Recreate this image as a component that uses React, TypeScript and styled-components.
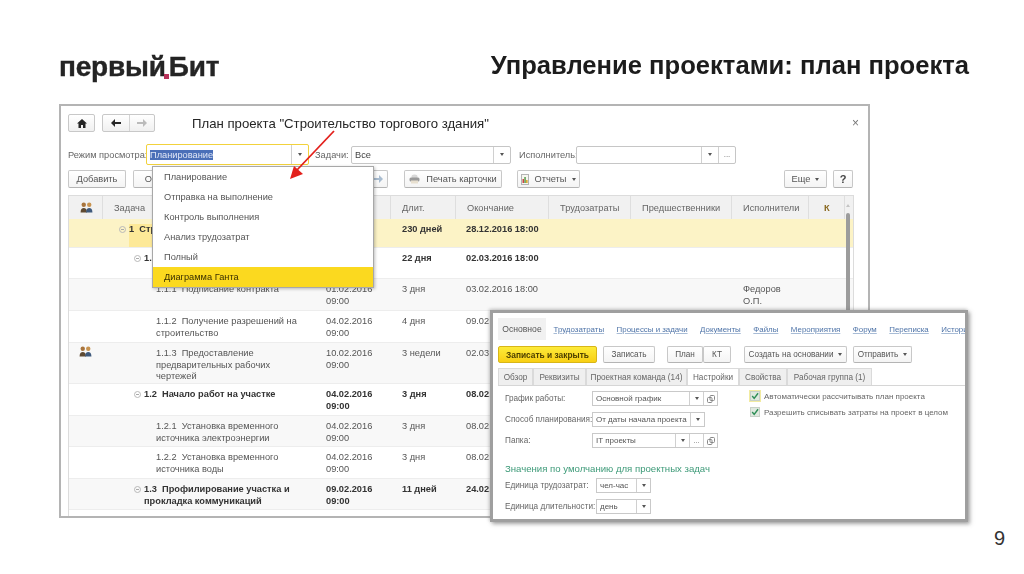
import React from "react";
import styled, { createGlobalStyle } from "styled-components";

const Global = createGlobalStyle`
  html, body { margin: 0; padding: 0; background: #fff; }
  body { font-family: "Liberation Sans", Arial, sans-serif; overflow: hidden; }
`;

const Slide = styled.div`
  position: relative;
  width: 1024px;
  height: 574px;
  overflow: hidden;
  background: #fff;
`;
const Header = styled.header`
  height: 104px;
  padding: 47px 55px 0 59px;
  box-sizing: border-box;
  display: flex;
  justify-content: space-between;
  align-items: flex-start;
`;
const Logo = styled.div`
  position: relative;
  margin-top: 2px;
  font-weight: 700;
  font-size: 28px;
  line-height: 36px;
  letter-spacing: -0.2px;
  color: #242424;
  -webkit-text-stroke: 0.4px #242424;
  filter: blur(0.4px);
`;
const LogoWord = styled.span`
  margin-right: 3px;
`;
const LogoDot = styled.span`
  position: absolute;
  left: 105px;
  top: 25px;
  width: 5px;
  height: 5px;
  background: #b8325a;
`;
const Title = styled.h1`
  margin: 3px 0 0;
  font-size: 25.6px;
  line-height: 30px;
  font-weight: 700;
  color: #1c1c1c;
  filter: blur(0.25px);
`;
const Win = styled.section`
  margin-left: 59px;
  width: 811px;
  height: 414px;
  box-sizing: border-box;
  border: 2px solid #b4b4b4;
  background: #fff;
  padding: 8px 15px 0 7px;
  overflow: hidden;
  color: #555;
  font-size: 9.25px;
  filter: blur(0.3px);
`;
const Row = styled.div<{ $mt?: number }>`
  display: flex;
  align-items: center;
  margin-top: ${(p) => p.$mt ?? 0}px;
`;
const NavGroup = styled.div`
  display: flex;
  height: 18px;
  box-sizing: border-box;
  border: 1px solid #c8c8c8;
  border-radius: 2px;
  background: linear-gradient(#fff, #f0f0f0);
  margin-right: 7px;
`;
const NavBtn = styled.div<{ $w: number; $sep?: boolean }>`
  width: ${(p) => p.$w}px;
  display: flex;
  align-items: center;
  justify-content: center;
  border-left: ${(p) => (p.$sep ? "1px solid #d4d4d4" : "none")};
`;
const WinTitle = styled.div`
  margin-left: 30px;
  font-size: 13.2px;
  color: #262626;
`;
const Close = styled.div`
  margin-left: auto;
  margin-right: -6px;
  color: #777;
  font-size: 12px;
`;
const Label = styled.span<{ $w: number; $pl?: number }>`
  width: ${(p) => p.$w}px;
  padding-left: ${(p) => p.$pl ?? 0}px;
  box-sizing: border-box;
  flex: none;
  white-space: nowrap;
  color: #666;
`;
const Field = styled.div<{ $w: number; $focus?: boolean }>`
  width: ${(p) => p.$w}px;
  height: ${(p) => (p.$focus ? 21 : 18)}px;
  flex: none;
  box-sizing: border-box;
  display: flex;
  border: 1px solid ${(p) => (p.$focus ? "#f2d23c" : "#c6c6c6")};
  background: #fff;
  border-radius: 2px;
  color: #444;
`;
const FieldText = styled.div`
  flex: 1;
  min-width: 0;
  padding-left: 3px;
  display: flex;
  align-items: center;
  white-space: nowrap;
`;
const Selected = styled.span`
  background: #4a6fb8;
  color: #dfe6f5;
`;
const FieldBtn = styled.div<{ $w?: number }>`
  width: ${(p) => p.$w ?? 16}px;
  flex: none;
  border-left: 1px solid #d0d0d0;
  display: flex;
  align-items: center;
  justify-content: center;
  color: #666;
  font-size: 8px;
`;
const Caret = styled.span`
  width: 0;
  height: 0;
  border-left: 2px solid transparent;
  border-right: 2px solid transparent;
  border-top: 3px solid #555;
`;
const Btn = styled.div<{ $w: number; $ml?: number; $h?: number; $gap?: number }>`
  width: ${(p) => p.$w}px;
  height: ${(p) => p.$h ?? 18}px;
  margin-left: ${(p) => p.$ml ?? 0}px;
  flex: none;
  box-sizing: border-box;
  border: 1px solid #c8c8c8;
  border-bottom-color: #b4b4b4;
  border-radius: 2px;
  background: linear-gradient(#fff, #f4f4f4);
  display: flex;
  align-items: center;
  justify-content: center;
  gap: ${(p) => p.$gap ?? 5}px;
  color: #555;
  white-space: nowrap;
`;
const HelpMark = styled.span`
  font-size: 11px;
  font-weight: 700;
  color: #444;
`;
const Spacer = styled.div`
  flex: 1;
`;
const Table = styled.div`
  margin-top: 7px;
  margin-right: -1px;
  border: 1px solid #dcdcdc;
  position: relative;
  height: 330px;
  overflow: hidden;
`;
const cols = "34px 217px 71px 65px 93px 82px 101px 77px 36px 1fr";
const HeadRow = styled.div`
  display: grid;
  grid-template-columns: ${cols};
  height: 23px;
  background: #f1f1f1;
`;
const HeadCell = styled.div<{ $accent?: boolean }>`
  display: flex;
  align-items: center;
  padding-left: ${(p) => (p.$accent ? 15 : 11)}px;
  border-right: 1px solid #dedede;
  color: ${(p) => (p.$accent ? "#8a6a22" : "#666")};
  font-weight: ${(p) => (p.$accent ? 700 : 400)};
`;
const BodyRow = styled.div<{ $h: number; $bg: string; $bold?: boolean }>`
  display: grid;
  grid-template-columns: ${cols};
  height: ${(p) => p.$h}px;
  background: ${(p) => p.$bg};
  border-bottom: 1px solid #ededed;
  box-sizing: border-box;
  line-height: 11.5px;
  font-weight: ${(p) => (p.$bold ? 700 : 400)};
  color: ${(p) => (p.$bold ? "#333" : "#555")};
`;
const Cell = styled.div<{ $pl?: number }>`
  padding: 5px 0 0 ${(p) => p.$pl ?? 11}px;
  min-width: 0;
  white-space: nowrap;
`;
const IconCell = styled.div`
  padding: 3px 0 0 10px;
`;
const TaskCell = styled.div<{ $indent: number }>`
  padding: 5px 14px 0 ${(p) => p.$indent}px;
  display: flex;
  gap: 3px;
  min-width: 0;
`;
const TaskText = styled.span<{ $mark?: boolean }>`
  white-space: pre-wrap;
  background: ${(p) => (p.$mark ? "#fde998" : "transparent")};
`;
const Toggle = styled.span`
  flex: none;
  width: 7px;
  height: 7px;
  margin-top: 2px;
  border: 1px solid #b9b9b9;
  border-radius: 50%;
  box-sizing: border-box;
  position: relative;
  &::after {
    content: "";
    position: absolute;
    left: 1px;
    right: 1px;
    top: 2px;
    height: 1px;
    background: #aaa;
  }
`;
const ScrollThumb = styled.div`
  position: absolute;
  right: 3px;
  top: 17px;
  bottom: 0;
  width: 4px;
  border-radius: 2px;
  background: #9c9c9c;
`;
const ScrollUp = styled.div`
  position: absolute;
  right: 3px;
  top: 8px;
  width: 0;
  border-left: 2px solid transparent;
  border-right: 2px solid transparent;
  border-bottom: 3px solid #c4c4c4;
`;
const Dropdown = styled.div`
  position: absolute;
  left: 152px;
  top: 166px;
  width: 222px;
  height: 122px;
  box-sizing: border-box;
  background: #fff;
  border: 1px solid #a8a8a8;
  box-shadow: 1px 1px 3px rgba(0, 0, 0, 0.25);
  font-size: 9.25px;
  color: #555;
  filter: blur(0.25px);
`;
const DropItem = styled.div<{ $active?: boolean }>`
  height: 20px;
  padding-left: 11px;
  display: flex;
  align-items: center;
  background: ${(p) => (p.$active ? "#fbd91f" : "transparent")};
  color: ${(p) => (p.$active ? "#3a3000" : "#555")};
`;
const ArrowSvg = styled.svg`
  position: absolute;
  left: 284px;
  top: 128px;
`;
const Overlay = styled.section`
  position: absolute;
  left: 490px;
  top: 310px;
  width: 478px;
  height: 212px;
  box-sizing: border-box;
  border: 3px solid #9f9f9f;
  box-shadow: 2px 2px 4px rgba(90, 90, 90, 0.55), -1px -1px 3px rgba(130, 130, 130, 0.4);
  background: #fff;
  padding: 5px 0 0 5px;
  overflow: hidden;
  font-size: 8.2px;
  color: #666;
  filter: blur(0.55px);
`;
const Nav = styled.div`
  display: flex;
  align-items: center;
  height: 22px;
  gap: 12.5px;
  white-space: nowrap;
`;
const NavCurrent = styled.div`
  background: #f1f1f1;
  height: 22px;
  width: 48px;
  margin-right: -5px;
  flex: none;
  display: flex;
  align-items: center;
  justify-content: center;
  color: #555;
  font-size: 8.6px;
`;
const NavLink = styled.span`
  color: #4f74a8;
  font-size: 7.9px;
  text-decoration: underline;
  text-decoration-color: #a8bcd6;
`;
const YellowBtn = styled.div`
  width: 99px;
  height: 17px;
  flex: none;
  box-sizing: border-box;
  border: 1px solid #d8b618;
  border-radius: 2px;
  background: linear-gradient(#fdeb3a, #f8cf14);
  display: flex;
  align-items: center;
  justify-content: center;
  color: #4d4100;
  font-size: 8.4px;
  font-weight: 700;
`;
const Tabs = styled.div`
  display: flex;
  height: 17px;
  margin: 5px -5px 0 0;
  border-bottom: 1px solid #d6d6d6;
  align-items: stretch;
`;
const Tab = styled.div<{ $w: number; $active?: boolean }>`
  width: ${(p) => p.$w}px;
  flex: none;
  box-sizing: border-box;
  display: flex;
  align-items: center;
  justify-content: center;
  white-space: nowrap;
  background: ${(p) => (p.$active ? "#fff" : "#efefef")};
  border: 1px solid #dadada;
  border-bottom: none;
`;
const SettingsBody = styled.div`
  display: flex;
`;
const FormCol = styled.div`
  width: 245px;
  flex: none;
  padding: 5px 0 0 7px;
  box-sizing: border-box;
`;
const FormRow = styled.div<{ $mt?: number; $label?: number }>`
  display: grid;
  grid-template-columns: ${(p) => p.$label ?? 87}px auto;
  justify-content: start;
  align-items: center;
  height: 15px;
  margin-top: ${(p) => p.$mt ?? 0}px;
  white-space: nowrap;
`;
const SmallField = styled.div<{ $w: number }>`
  width: ${(p) => p.$w}px;
  height: 15px;
  box-sizing: border-box;
  border: 1px solid #c9c9c9;
  display: flex;
  color: #555;
  font-size: 8px;
`;
const SmallBtn = styled.div`
  width: 13px;
  flex: none;
  border-left: 1px solid #d0d0d0;
  display: flex;
  align-items: center;
  justify-content: center;
  font-size: 7px;
  color: #666;
`;
const SectionHead = styled.div`
  margin-top: 14px;
  font-size: 9.6px;
  line-height: 14px;
  color: #3d9a78;
  white-space: nowrap;
`;
const Checks = styled.div`
  padding: 5px 0 0 7px;
  display: flex;
  flex-direction: column;
  gap: 6px;
`;
const CheckRow = styled.div`
  display: flex;
  align-items: center;
  gap: 4px;
  height: 10px;
  white-space: nowrap;
  font-size: 8px;
`;
const CheckBox = styled.span<{ $ring?: boolean }>`
  width: 10px;
  height: 10px;
  flex: none;
  background: #dfe9df;
  border: 1px solid #c8d0c8;
  box-sizing: border-box;
  display: flex;
  align-items: center;
  justify-content: center;
  box-shadow: ${(p) => (p.$ring ? "0 0 0 1px #f2eba0" : "none")};
`;
const Footer = styled.footer`
  display: flex;
  justify-content: flex-end;
  padding: 7px 19px 0 0;
  font-size: 20px;
  line-height: 26px;
  color: #333;
`;

const People = () => (
  <svg width="13" height="11" viewBox="0 0 14 12">
    <circle cx="4" cy="3" r="2.4" fill="#a8743c" />
    <path d="M0.5 11.500c0-3.500 1.500-5 3.500-5s3.500 1.500 3.500 5z" fill="#5f4a32" />
    <circle cx="10" cy="3" r="2.4" fill="#c8934f" />
    <path d="M6.500 11.500c0-3.500 1.500-5 3.500-5s3.500 1.500 3.500 5z" fill="#3f5a7c" />
  </svg>
);
const Home = () => (
  <svg width="10" height="9" viewBox="0 0 10 9">
    <path d="M5 0 0 4.500h1.500V9h2.500V6h2v3h2.500V4.500H10z" fill="#262626" />
  </svg>
);
const ArrowL = ({ color, flip }: { color: string; flip?: boolean }) => (
  <svg width="10" height="8" viewBox="0 0 10 8" style={flip ? { transform: "scaleX(-1)" } : undefined}>
    <path d="M4 0 0 4l4 4V5h6V3H4z" fill={color} />
  </svg>
);
const Printer = () => (
  <svg width="11" height="10" viewBox="0 0 11 10">
    <ellipse cx="5.500" cy="2.500" rx="3" ry="2" fill="#d8d8d8" />
    <rect x="0.500" y="3.500" width="10" height="4" rx="1.500" fill="#9a9a9a" />
    <rect x="2" y="6.500" width="7" height="3" fill="#e8e0d0" />
  </svg>
);
const Report = () => (
  <svg width="8" height="11" viewBox="0 0 8 11">
    <rect x="0.500" y="0.500" width="7" height="10" fill="#f6f6f0" stroke="#b4b4b4" />
    <rect x="1.500" y="5" width="1.500" height="4" fill="#c44" />
    <rect x="3.300" y="3" width="1.500" height="6" fill="#5a9a4a" />
    <rect x="5.100" y="6" width="1.500" height="3" fill="#d9a520" />
  </svg>
);
const Tick = () => (
  <svg width="11" height="10" viewBox="0 0 10 9">
    <path d="M1.500 4.500 4 7.500 8.800 1" fill="none" stroke="#2f8f57" strokeWidth="1.800" />
  </svg>
);
const Link2 = () => (
  <svg width="8" height="8" viewBox="0 0 8 8">
    <rect x="0.500" y="2.500" width="4.500" height="5" rx="1" fill="none" stroke="#888" />
    <rect x="3" y="0.500" width="4.500" height="5" rx="1" fill="none" stroke="#888" />
  </svg>
);

type Line = {
  h: number;
  bg: string;
  bold?: boolean;
  people?: boolean;
  indent: number;
  toggle?: boolean;
  mark?: boolean;
  task: string;
  start: string[];
  dur: string;
  end: string[];
  who?: string[];
};

const lines: Line[] = [
  { h: 29, bg: "#fcf3c6", bold: true, indent: 16, toggle: true, mark: true, task: "1  Строительство торгового здания", start: ["01.02.2016", "09:00"], dur: "230 дней", end: ["28.12.2016 18:00"] },
  { h: 31, bg: "#fff", bold: true, indent: 31, toggle: true, task: "1.1  Подготовка", start: ["01.02.2016", "09:00"], dur: "22 дня", end: ["02.03.2016 18:00"] },
  { h: 32, bg: "#f8f8f8", indent: 53, task: "1.1.1  Подписание контракта", start: ["01.02.2016", "09:00"], dur: "3 дня", end: ["03.02.2016 18:00"], who: ["Федоров", "О.П."] },
  { h: 32, bg: "#fff", indent: 53, task: "1.1.2  Получение разрешений на строительство", start: ["04.02.2016", "09:00"], dur: "4 дня", end: ["09.02.2016 18:00"] },
  { h: 41, bg: "#f8f8f8", people: true, indent: 53, task: "1.1.3  Предоставление предварительных рабочих чертежей", start: ["10.02.2016", "09:00"], dur: "3 недели", end: ["02.03.2016 18:00"] },
  { h: 32, bg: "#fff", bold: true, indent: 31, toggle: true, task: "1.2  Начало работ на участке", start: ["04.02.2016", "09:00"], dur: "3 дня", end: ["08.02.2016 18:00"] },
  { h: 31, bg: "#f8f8f8", indent: 53, task: "1.2.1  Установка временного источника электроэнергии", start: ["04.02.2016", "09:00"], dur: "3 дня", end: ["08.02.2016 18:00"] },
  { h: 32, bg: "#fff", indent: 53, task: "1.2.2  Установка временного источника воды", start: ["04.02.2016", "09:00"], dur: "3 дня", end: ["08.02.2016 18:00"] },
  { h: 31, bg: "#f8f8f8", bold: true, indent: 31, toggle: true, task: "1.3  Профилирование участка и прокладка коммуникаций", start: ["09.02.2016", "09:00"], dur: "11 дней", end: ["24.02.2016 18:00"] },
];

const heads = ["Задача", "Начало", "Длит.", "Окончание", "Трудозатраты", "Предшественники", "Исполнители"];
const dropItems = ["Планирование", "Отправка на выполнение", "Контроль выполнения", "Анализ трудозатрат", "Полный"];
const navLinks = ["Трудозатраты", "Процессы и задачи", "Документы", "Файлы", "Мероприятия", "Форум", "Переписка", "История"];

const Multi = ({ parts }: { parts: string[] }) => (
  <>
    {parts.map((p) => (
      <div key={p}>{p}</div>
    ))}
  </>
);

export default function App() {
  return (
    <Slide>
      <Global />
      <Header>
        <Logo>
          <LogoWord>первый</LogoWord>Бит
          <LogoDot />
        </Logo>
        <Title>Управление проектами: план проекта</Title>
      </Header>

      <Win>
        <Row>
          <NavGroup>
            <NavBtn $w={25}>
              <Home />
            </NavBtn>
          </NavGroup>
          <NavGroup>
            <NavBtn $w={26}>
              <ArrowL color="#262626" />
            </NavBtn>
            <NavBtn $w={24} $sep>
              <ArrowL color="#bbb" flip />
            </NavBtn>
          </NavGroup>
          <WinTitle>План проекта "Строительство торгового здания"</WinTitle>
          <Close>×</Close>
        </Row>
        <Row $mt={12}>
          <Label $w={78}>Режим просмотра:</Label>
          <Field $w={163} $focus>
            <FieldText>
              <Selected>Планирование</Selected>
            </FieldText>
            <FieldBtn>
              <Caret />
            </FieldBtn>
          </Field>
          <Label $w={42} $pl={6}>Задачи:</Label>
          <Field $w={160}>
            <FieldText>Все</FieldText>
            <FieldBtn>
              <Caret />
            </FieldBtn>
          </Field>
          <Label $w={65} $pl={8}>Исполнитель:</Label>
          <Field $w={160}>
            <FieldText />
            <FieldBtn>
              <Caret />
            </FieldBtn>
            <FieldBtn>...</FieldBtn>
          </Field>
        </Row>
        <Row $mt={5}>
          <Btn $w={58}>Добавить</Btn>
          <Btn $w={60} $ml={7}>Открыть</Btn>
          <Btn $w={20} $ml={175}>
            <ArrowL color="#a8bcd0" flip />
          </Btn>
          <Btn $w={98} $ml={16} $gap={6}>
            <Printer />
            Печать карточки
          </Btn>
          <Btn $w={63} $ml={15} $gap={6}>
            <Report />
            Отчеты
            <Caret />
          </Btn>
          <Spacer />
          <Btn $w={43}>
            Еще
            <Caret />
          </Btn>
          <Btn $w={20} $ml={6}><HelpMark>?</HelpMark></Btn>
        </Row>
        <Table>
          <HeadRow>
            <HeadCell>
              <People />
            </HeadCell>
            {heads.map((h) => (
              <HeadCell key={h}>{h}</HeadCell>
            ))}
            <HeadCell $accent>К</HeadCell>
          </HeadRow>
          {lines.map((l) => (
            <BodyRow key={l.task} $h={l.h} $bg={l.bg} $bold={l.bold}>
              <IconCell>{l.people && <People />}</IconCell>
              <TaskCell $indent={l.indent}>
                {l.toggle && <Toggle />}
                <TaskText $mark={l.mark}>{l.task}</TaskText>
              </TaskCell>
              <Cell $pl={6}>
                <Multi parts={l.start} />
              </Cell>
              <Cell>{l.dur}</Cell>
              <Cell $pl={10}>
                <Multi parts={l.end} />
              </Cell>
              <Cell />
              <Cell />
              <Cell>{l.who && <Multi parts={l.who} />}</Cell>
              <Cell />
              <Cell />
            </BodyRow>
          ))}
          <ScrollUp />
          <ScrollThumb />
        </Table>
      </Win>

      <Footer>9</Footer>

      <Dropdown>
        {dropItems.map((d) => (
          <DropItem key={d}>{d}</DropItem>
        ))}
        <DropItem $active>Диаграмма Ганта</DropItem>
      </Dropdown>

      <ArrowSvg width="54" height="54" viewBox="0 0 54 54">
        <path d="M50 3 13 42" stroke="#e3201c" strokeWidth="1.800" fill="none" />
        <path d="M6 51 10 38 19 46z" fill="#e3201c" />
      </ArrowSvg>

      <Overlay>
        <Nav>
          <NavCurrent>Основное</NavCurrent>
          {navLinks.map((n) => (
            <NavLink key={n}>{n}</NavLink>
          ))}
        </Nav>
        <Row $mt={6}>
          <YellowBtn>Записать и закрыть</YellowBtn>
          <Btn $w={52} $ml={6} $h={17}>Записать</Btn>
          <Btn $w={36} $ml={12} $h={17}>План</Btn>
          <Btn $w={28} $h={17}>КТ</Btn>
          <Btn $w={103} $ml={13} $h={17}>
            Создать на основании
            <Caret />
          </Btn>
          <Btn $w={59} $ml={6} $h={17}>
            Отправить
            <Caret />
          </Btn>
        </Row>
        <Tabs>
          <Tab $w={35}>Обзор</Tab>
          <Tab $w={53}>Реквизиты</Tab>
          <Tab $w={101}>Проектная команда (14)</Tab>
          <Tab $w={52} $active>Настройки</Tab>
          <Tab $w={48}>Свойства</Tab>
          <Tab $w={85}>Рабочая группа (1)</Tab>
        </Tabs>
        <SettingsBody>
          <FormCol>
            <FormRow>
              <span>График работы:</span>
              <SmallField $w={126}>
                <FieldText>Основной график</FieldText>
                <SmallBtn><Caret /></SmallBtn>
                <SmallBtn><Link2 /></SmallBtn>
              </SmallField>
            </FormRow>
            <FormRow $mt={6}>
              <span>Способ планирования:</span>
              <SmallField $w={113}>
                <FieldText>От даты начала проекта</FieldText>
                <SmallBtn><Caret /></SmallBtn>
              </SmallField>
            </FormRow>
            <FormRow $mt={6}>
              <span>Папка:</span>
              <SmallField $w={126}>
                <FieldText>IT проекты</FieldText>
                <SmallBtn><Caret /></SmallBtn>
                <SmallBtn>...</SmallBtn>
                <SmallBtn><Link2 /></SmallBtn>
              </SmallField>
            </FormRow>
            <SectionHead>Значения по умолчанию для проектных задач</SectionHead>
            <FormRow $mt={2} $label={91}>
              <span>Единица трудозатрат:</span>
              <SmallField $w={55}>
                <FieldText>чел-час</FieldText>
                <SmallBtn><Caret /></SmallBtn>
              </SmallField>
            </FormRow>
            <FormRow $mt={6} $label={91}>
              <span>Единица длительности:</span>
              <SmallField $w={55}>
                <FieldText>день</FieldText>
                <SmallBtn><Caret /></SmallBtn>
              </SmallField>
            </FormRow>
          </FormCol>
          <Checks>
            <CheckRow>
              <CheckBox $ring><Tick /></CheckBox>
              Автоматически рассчитывать план проекта
            </CheckRow>
            <CheckRow>
              <CheckBox><Tick /></CheckBox>
              Разрешить списывать затраты на проект в целом
            </CheckRow>
          </Checks>
        </SettingsBody>
      </Overlay>
    </Slide>
  );
}
